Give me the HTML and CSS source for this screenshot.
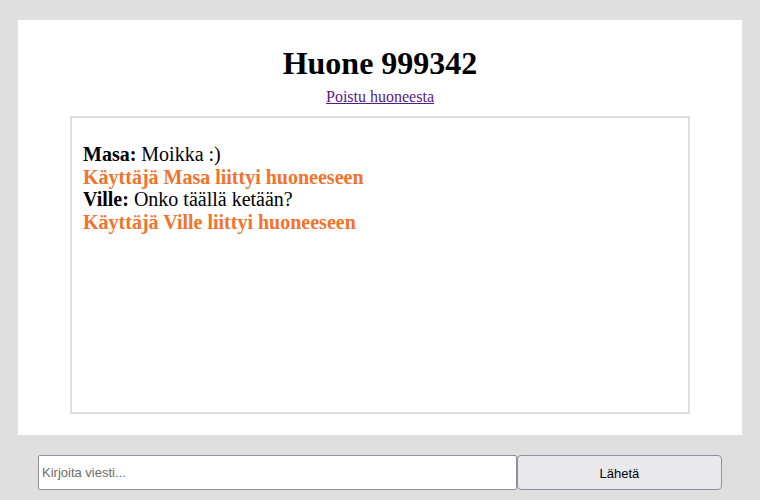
FILE: index.html
```html
<!DOCTYPE html>
<html lang="fi">
<head>
<meta charset="utf-8">
<title>Huone 999342</title>
<link rel="stylesheet" href="styles.css">
</head>
<body>
<main class="room">
  <h1 class="room-title">Huone 999342</h1>
  <p class="leave"><a href="#" class="leave-link">Poistu huoneesta</a></p>
  <div class="chat">
    <div class="msg"><b>Masa:</b> Moikka :)</div>
    <div class="msg notice">Käyttäjä Masa liittyi huoneeseen</div>
    <div class="msg"><b>Ville:</b> Onko täällä ketään?</div>
    <div class="msg notice">Käyttäjä Ville liittyi huoneeseen</div>
  </div>
</main>
<form class="send">
  <input class="send-input" type="text" placeholder="Kirjoita viesti...">
  <button class="send-btn" type="button">Lähetä</button>
</form>
</body>
</html>
```
FILE: styles.css
```css
html, body {
  margin: 0;
  padding: 0;
}
body {
  background: #dfdfdf;
  font-family: "Liberation Serif", "Times New Roman", serif;
  color: #000;
  height: 500px;
  overflow: hidden;
}
.room {
  background: #fff;
  margin: 20px 18px 0;
  padding: 25px 0 21px;
  display: flex;
  flex-direction: column;
  align-items: center;
}
.room-title {
  margin: 0;
  font-size: 32px;
  font-weight: bold;
  line-height: 37px;
}
.leave {
  margin: 6px 0 10px;
  font-size: 16px;
  line-height: 18px;
}
.leave-link {
  color: #551a8b;
}
.chat {
  box-sizing: border-box;
  width: 620px;
  height: 298px;
  border: 2px solid #dddddd;
  padding: 25px 11px 19px;
  font-size: 20px;
  line-height: 22.7px;
}
.notice {
  color: #f3722c;
  font-weight: bold;
}
.send {
  width: 684px;
  margin: 20px auto 0;
  display: flex;
}
.send-input {
  box-sizing: border-box;
  width: 70%;
  height: 35px;
  margin: 0;
  border: 1px solid #8f8f9d;
  border-radius: 2px;
  padding: 0 3px;
  font-family: "Liberation Sans", Arial, sans-serif;
  font-size: 13px;
  background: #fff;
}
.send-input::placeholder {
  color: #6b6b6b;
}
.send-btn {
  box-sizing: border-box;
  width: 30%;
  height: 35px;
  margin: 0;
  border: 1px solid #8f8f9d;
  border-radius: 4px;
  background: #e9e9ed;
  font-family: "Liberation Sans", Arial, sans-serif;
  font-size: 13px;
  color: #000;
  padding-top: 2px;
}
```
